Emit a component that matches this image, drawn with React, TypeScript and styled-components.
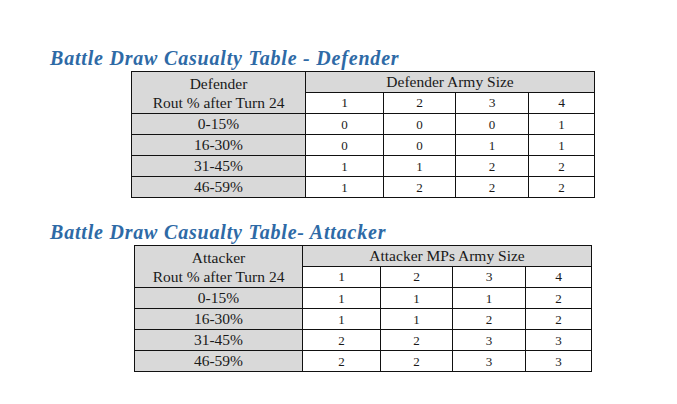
import React from 'react';
import styled, { createGlobalStyle } from 'styled-components';

const GlobalStyle = createGlobalStyle`
  html, body {
    margin: 0;
    padding: 0;
    background: #ffffff;
  }
  body {
    font-family: 'Liberation Serif', 'DejaVu Serif', serif;
    color: #1a1a1a;
  }
`;

const Page = styled.div`
  width: 677px;
  height: 404px;
  padding: 46px 0 0 50px;
  box-sizing: border-box;
  display: flex;
  flex-direction: column;
`;

const Section = styled.section<{ gap?: number }>`
  display: flex;
  flex-direction: column;
  margin-bottom: ${({ gap }) => gap ?? 0}px;
`;

const Title = styled.h2`
  margin: 0;
  height: 25px;
  font-family: 'Liberation Serif', serif;
  font-style: italic;
  font-weight: 700;
  font-size: 20px;
  line-height: 25px;
  color: #2e6aa6;
  letter-spacing: 0.8px;
`;

const Table = styled.table<{ indent: number; width: number }>`
  margin-left: ${({ indent }) => indent}px;
  width: ${({ width }) => width}px;
  border-collapse: collapse;
  table-layout: fixed;
  font-size: 15.5px;

  td, th {
    border: 1px solid #111;
    padding: 0;
    text-align: center;
    font-weight: 400;
    line-height: 1;
  }
`;

const HeadCell = styled.th`
  background: #d9d9d9;
  height: 20px;
`;

const SubHead = styled.th`
  background: #ffffff;
  height: 20px;
  font-size: 13.5px;
`;

const LabelCell = styled.th`
  background: #d9d9d9;
  height: 20px;
`;

const ValueCell = styled.td`
  background: #ffffff;
  font-size: 13px;
`;

const RowHead = styled.span`
  display: block;
  line-height: 19px;
`;

interface TableData {
  title: string;
  side: string;
  sizeLabel: string;
  indent: number;
  width: number;
  cols: number[];
  rows: { range: string; values: number[] }[];
}

const tables: TableData[] = [
  {
    title: 'Battle Draw Casualty Table - Defender',
    side: 'Defender',
    sizeLabel: 'Defender Army Size',
    indent: 81,
    width: 463,
    cols: [174, 78, 72, 73, 66],
    rows: [
      { range: '0-15%', values: [0, 0, 0, 1] },
      { range: '16-30%', values: [0, 0, 1, 1] },
      { range: '31-45%', values: [1, 1, 2, 2] },
      { range: '46-59%', values: [1, 2, 2, 2] },
    ],
  },
  {
    title: 'Battle Draw Casualty Table- Attacker',
    side: 'Attacker',
    sizeLabel: 'Attacker MPs Army Size',
    indent: 84,
    width: 457,
    cols: [168, 78, 72, 73, 66],
    rows: [
      { range: '0-15%', values: [1, 1, 1, 2] },
      { range: '16-30%', values: [1, 1, 2, 2] },
      { range: '31-45%', values: [2, 2, 3, 3] },
      { range: '46-59%', values: [2, 2, 3, 3] },
    ],
  },
];

const CasualtyTable: React.FC<{ data: TableData }> = ({ data }) => (
  <Table indent={data.indent} width={data.width}>
    <colgroup>
      {data.cols.map((w, i) => (
        <col key={i} style={{ width: w }} />
      ))}
    </colgroup>
    <thead>
      <tr>
        <HeadCell rowSpan={2}>
          <RowHead>{data.side}</RowHead>
          <RowHead>Rout % after Turn 24</RowHead>
        </HeadCell>
        <HeadCell colSpan={4}>{data.sizeLabel}</HeadCell>
      </tr>
      <tr>
        {[1, 2, 3, 4].map((n) => (
          <SubHead key={n}>{n}</SubHead>
        ))}
      </tr>
    </thead>
    <tbody>
      {data.rows.map((r) => (
        <tr key={r.range}>
          <LabelCell>{r.range}</LabelCell>
          {r.values.map((v, i) => (
            <ValueCell key={i}>{v}</ValueCell>
          ))}
        </tr>
      ))}
    </tbody>
  </Table>
);

const App: React.FC = () => (
  <>
    <GlobalStyle />
    <Page>
      <Section gap={22}>
        <Title>{tables[0].title}</Title>
        <CasualtyTable data={tables[0]} />
      </Section>
      <Section>
        <Title>{tables[1].title}</Title>
        <CasualtyTable data={tables[1]} />
      </Section>
    </Page>
  </>
);

export default App;
